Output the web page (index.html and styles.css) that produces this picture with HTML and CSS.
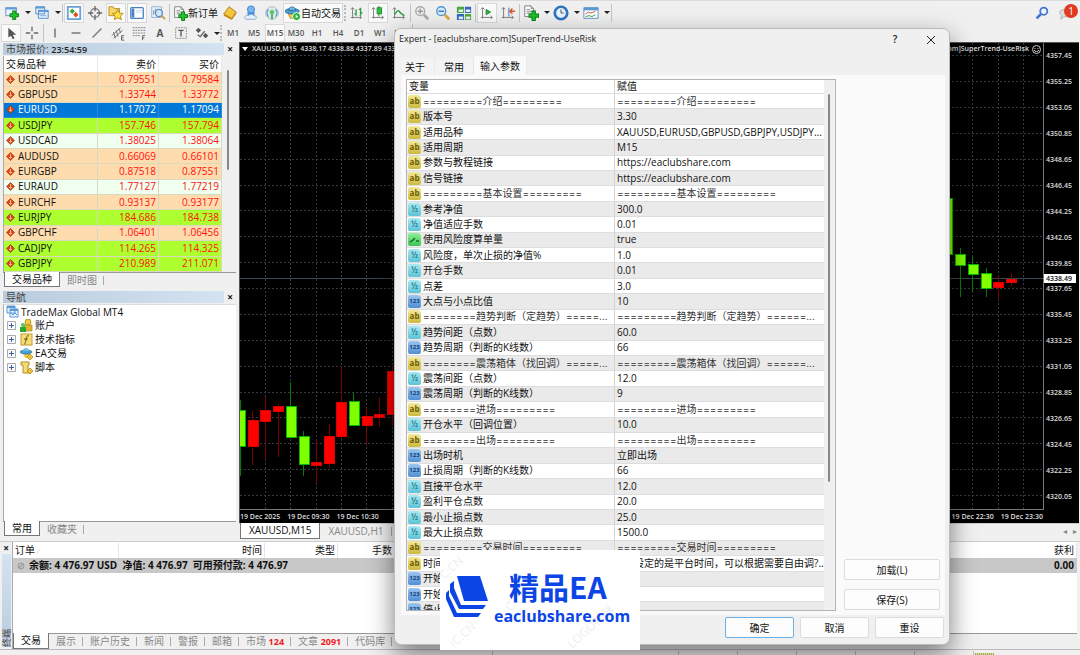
FILE: index.html
```html
<!DOCTYPE html>
<html lang="zh-CN">
<head>
    <meta charset="UTF-8">
    <meta name="viewport" content="width=device-width, initial-scale=1.0">
    <title>TradeMax Global MT4</title>
    <link rel="stylesheet" href="styles.css">
</head>
<body>
    <!-- 图标 -->
    <svg class="sprite" aria-hidden="true">
        <symbol id="down" viewBox="0 0 9 9"><path d="M4.500.5l4 4-4 4-4-4z" fill="#d9481c" stroke="#8f2a0c" stroke-width=".6"/><path d="M4.500 2v4M3 5l1.500 1.500L6 5" fill="none" stroke="#ffb48a"/></symbol>
        <symbol id="plus" viewBox="0 0 10 10"><path d="M3.500.5h3v3h3v3h-3v3h-3v-3h-3v-3h3z" fill="#1fc32a" stroke="#0b7f17"/></symbol>
        <symbol id="doc" viewBox="0 0 12 14"><path d="M1 1h7l3 3v9H1z" fill="#fff" stroke="#777"/><path d="M8 1v3h3M3 5h4M3 7h6M3 9h5" fill="none" stroke="#888"/></symbol>
        <symbol id="plusbox" viewBox="0 0 9 9"><path d="M.5.5h8v8h-8z" fill="#fafafa" stroke="#aaa"/><path d="M2 4.500h5M4.500 2v5" stroke="#3b5fa8"/></symbol>
    </svg>

    <div class="app">
        <div class="toolbar">
            <button class="tool" aria-label="新图表"><svg viewBox="0 0 18 18"><path d="M2 3h12v9H2z" fill="#eaf4fd" stroke="#5b8fc0"/><path d="M2 3h12v2H2z" fill="#5b9ad6"/><use href="#plus" x="6" y="6" width="11" height="11"/></svg></button>
            <button class="caret" aria-label="更多图表"></button>
            <button class="tool" aria-label="模板组"><svg viewBox="0 0 18 18"><path d="M2 2h10v8H2zM5 6h11v9H5z" fill="#e3f0fc" stroke="#4f8bc6"/><path d="M2 2h10v2H2zM5 6h11v2H5z" fill="#5b9ad6"/><path d="M7 12h7" stroke="#7fa8d0"/></svg></button>
            <button class="caret" aria-label="更多模板组"></button>
            <span class="sep"></span>
            <button class="tool pressed" aria-label="市场报价"><svg viewBox="0 0 18 18"><path d="M2 2h14v14H2z" fill="#fff" stroke="#6ba0d6" stroke-width="2"/><path d="M7 4l3 3-3 3-3-3z" fill="#2fae3b"/><path d="M11 8l3 3-3 3-3-3z" fill="#dd4a22"/></svg></button>
            <button class="tool" aria-label="数据窗口"><svg viewBox="0 0 18 18"><circle cx="9" cy="9" r="5" fill="none" stroke="#777" stroke-width="1.500"/><path d="M9 1v6M9 11v6M1 9h6M11 9h6" stroke="#666" stroke-width="1.500"/></svg></button>
            <button class="tool pressed" aria-label="导航"><svg viewBox="0 0 18 18"><path d="M1 2h5l1 2h6v8H1z" fill="#f6d66a" stroke="#b58d21"/><path d="M11 5l2 4 4 .5-3 3 1 4-4-2-4 2 1-4-3-3 4-.5z" fill="#ffdf3f" stroke="#b5861b"/></svg></button>
            <button class="tool pressed" aria-label="终端"><svg viewBox="0 0 18 18"><rect x="2" y="3" width="14" height="12" rx="1" fill="#fff" stroke="#4a7fc0" stroke-width="1.500"/><path d="M3 4h3v10H3z" fill="#4a7fc0"/><path d="M8 6h6M8 8h6" stroke="#c4d6ea"/></svg></button>
            <button class="tool" aria-label="策略测试"><svg viewBox="0 0 18 18"><path d="M2 2h11v12H2z" fill="#eef5fc" stroke="#88a9cb"/><path d="M4 11V6M6 9V4M8 10V6" stroke="#6a8fb8"/><circle cx="10" cy="9" r="4" fill="#cfe6fa" fill-opacity=".8" stroke="#5b8fc0" stroke-width="1.500"/><path d="M13 12l4 4" stroke="#d49a35" stroke-width="2"/></svg></button>
            <span class="sep"></span>
            <button class="tool wide"><svg viewBox="0 0 18 18"><use href="#doc" x="2" y="1" width="12" height="14"/><use href="#plus" x="7" y="7" width="11" height="11"/></svg>新订单</button>
            <button class="tool" aria-label="MetaEditor"><svg viewBox="0 0 18 18"><path d="M2 10l6-8 8 6-5 7z" fill="#f3c63c" stroke="#a9771a"/><path d="M2 10l9 5v2L2 12zM11 15l5-7v2l-5 7z" fill="#c98b1c"/></svg></button>
            <button class="tool" aria-label="云端"><svg viewBox="0 0 18 18"><circle cx="9" cy="5" r="4" fill="#7bb6ef" stroke="#3a7cc4"/><path d="M5 8h8v4H5z" fill="#4b93df"/><path d="M3 16c-3-3 1-5 3-4 2-2 5-2 6 0 3 0 4 2 2 4z" fill="#e9f2fb" stroke="#7fa5cf"/></svg></button>
            <button class="tool" aria-label="信号"><svg viewBox="0 0 18 18"><circle cx="9" cy="9" r="7" fill="#dce9ee" stroke="#9ab6c4"/><path d="M5 5a6 6 0 000 8M13 5a6 6 0 010 8" fill="none" stroke="#5aa0c8" stroke-width="1.500"/><circle cx="9" cy="8" r="2.500" fill="#5cc45c"/><path d="M9 10v6" stroke="#4dae4d" stroke-width="2"/></svg></button>
            <button class="tool wide pressed"><svg viewBox="0 0 18 18"><path d="M3 8h11l-2 7H6z" fill="#f0c845" stroke="#b58d21"/><ellipse cx="8" cy="7" rx="8" ry="3" fill="#4a9fd0" stroke="#246d9c"/><path d="M4 6c0-5 8-5 8 0z" fill="#6fbce6" stroke="#246d9c"/><circle cx="13" cy="13" r="4.500" fill="#28b53a" stroke="#fff"/><path d="M12 11l3 2-3 2z" fill="#fff"/></svg>自动交易</button>
            <span class="grip"></span>
            <button class="tool" aria-label="柱状图"><svg viewBox="0 0 18 18"><path d="M4 3v12M2 14h12M2 5l2-2 2 2M12 12l2 2-2 2" fill="none" stroke="#777"/><path d="M8 5v7M8 10H6M13 3v9M13 5h-2M15 9h-2" stroke="#2c9c40" stroke-width="1.500"/></svg></button>
            <button class="tool pressed" aria-label="蜡烛图"><svg viewBox="0 0 18 18"><path d="M4 3v12M2 14h13M2 5l2-2 2 2M13 12l2 2-2 2" fill="none" stroke="#777"/><path d="M10 1v12" stroke="#18862a"/><path d="M8 3h5v7H8z" fill="#2fc140" stroke="#18862a"/></svg></button>
            <button class="tool" aria-label="折线图"><svg viewBox="0 0 18 18"><path d="M4 3v12M2 14h13M2 5l2-2 2 2M13 12l2 2-2 2" fill="none" stroke="#777"/><path d="M4 11c3-6 5-5 6-3s3 2 5 4" fill="none" stroke="#2c9c40" stroke-width="1.500"/></svg></button>
            <span class="sep"></span>
            <button class="tool" aria-label="放大"><svg viewBox="0 0 18 18"><path d="M11 11l5 5" stroke="#aaa" stroke-width="3"/><circle cx="7" cy="7" r="5" fill="#eee" stroke="#aaa" stroke-width="1.500"/><path d="M4 7h6M7 4v6" stroke="#999" stroke-width="1.500"/></svg></button>
            <button class="tool" aria-label="缩小"><svg viewBox="0 0 18 18"><path d="M11 11l5 5" stroke="#d9ab3a" stroke-width="3"/><circle cx="7" cy="7" r="5" fill="#d8edfc" stroke="#4d93d0" stroke-width="1.500"/><path d="M4 7h6" stroke="#2c6fb0" stroke-width="1.500"/></svg></button>
            <button class="tool" aria-label="平铺窗口"><svg viewBox="0 0 18 18"><path d="M1 2h8v7H1zM10 10h7v7h-7z" fill="#4aa83a"/><path d="M10 2h7v7h-7zM1 10h8v7H1z" fill="#3467c0"/><path d="M3 5h5v3H3zM11 5h5v3h-5zM3 13h5v3H3zM11 13h5v3h-5z" fill="#e6f1f8"/></svg></button>
            <span class="sep"></span>
            <button class="tool pressed" aria-label="自动滚动"><svg viewBox="0 0 18 18"><path d="M4 3v12M2 14h13M2 5l2-2 2 2M13 12l2 2-2 2" fill="none" stroke="#777"/><path d="M8 5l5 3-5 3z" fill="#2fb53f" stroke="#18862a"/></svg></button>
            <button class="tool" aria-label="图表平移"><svg viewBox="0 0 18 18"><path d="M4 3v12M2 14h13M2 5l2-2 2 2M13 12l2 2-2 2" fill="none" stroke="#777"/><path d="M10 3v10" stroke="#3467c0"/><path d="M17 7h-5M14 4l-3 3 3 3" fill="none" stroke="#d2522a" stroke-width="1.500"/></svg></button>
            <span class="sep"></span>
            <button class="tool" aria-label="技术指标"><svg viewBox="0 0 18 18"><use href="#doc" x="1" y="0" width="12" height="14"/><use href="#plus" x="6" y="6" width="12" height="12"/></svg></button>
            <button class="caret" aria-label="更多指标"></button>
            <button class="tool" aria-label="时间周期"><svg viewBox="0 0 18 18"><circle cx="9" cy="9" r="7" fill="#e8f3fc" stroke="#2f74bd" stroke-width="3"/><path d="M9 5v4h3" fill="none" stroke="#444"/></svg></button>
            <button class="caret" aria-label="更多周期"></button>
            <button class="tool" aria-label="图表模板"><svg viewBox="0 0 18 18"><path d="M1 3h16v12H1z" fill="#fff" stroke="#4f8bc6"/><path d="M1 3h16v3H1z" fill="#5b9ad6"/><path d="M3 10l3-2 3 1 5-2" fill="none" stroke="#c2502c"/><path d="M3 13l4-1 3 1 4-2" fill="none" stroke="#2c9c40"/></svg></button>
            <button class="caret" aria-label="更多模板"></button>
            <span class="sep"></span>
            <span class="spacer"></span>
            <button class="tool" aria-label="搜索"><svg viewBox="0 0 18 18"><circle cx="11" cy="7" r="4" fill="#eef4ff" stroke="#4472cf" stroke-width="2"/><path d="M8 10l-5 5" stroke="#4472cf" stroke-width="3"/></svg></button>
            <button class="tool notice" aria-label="通知"><svg viewBox="0 0 18 18"><path d="M2 8c0-4 13-4 13 1 0 4-5 5-8 4l-4 3 1-4c-1-1-2-2-2-4z" fill="#ddd" stroke="#aaa"/></svg><span class="badge">1</span></button>
        </div>

        <div class="toolbar drawing">
            <button class="tool pressed" aria-label="光标"><svg viewBox="0 0 18 18"><path d="M6 3v11l3-2 2 4 2-1-2-4h4z" fill="#555"/></svg></button>
            <button class="tool" aria-label="十字准线"><svg viewBox="0 0 18 18"><path d="M9 2v5M9 11v5M2 9h5M11 9h5" stroke="#666" stroke-width="1.500"/></svg></button>
            <span class="sep"></span>
            <button class="tool" aria-label="垂直线"><svg viewBox="0 0 18 18"><path d="M9 4v10" stroke="#666" stroke-width="1.500"/></svg></button>
            <button class="tool" aria-label="水平线"><svg viewBox="0 0 18 18"><path d="M4 9h10" stroke="#666" stroke-width="1.500"/></svg></button>
            <button class="tool" aria-label="趋势线"><svg viewBox="0 0 18 18"><path d="M4 14L14 4" stroke="#777" stroke-width="1.500"/></svg></button>
            <button class="tool" aria-label="等距通道"><svg viewBox="0 0 18 18"><path d="M2 12L12 3M4 15l10-9M4 8l2 7M7 6l2 7M10 4l2 5" stroke="#666"/><path d="M16 12h-3v5h3M13 14.500h2" fill="none" stroke="#555"/></svg></button>
            <button class="tool" aria-label="斐波纳契"><svg viewBox="0 0 18 18"><path d="M2 3h14M2 6h14M2 9h14M2 12h9" stroke="#777" stroke-dasharray="2 1"/><path d="M16 12h-3v5M13 14.500h2" fill="none" stroke="#555"/></svg></button>
            <button class="tool letter">A</button>
            <button class="tool" aria-label="文本标签"><svg viewBox="0 0 18 18"><path d="M3 3h12v12H3z" fill="none" stroke="#888" stroke-dasharray="2 1"/><path d="M6 6h6M9 6v7" stroke="#555" stroke-width="1.500"/></svg></button>
            <button class="tool" aria-label="箭头"><svg viewBox="0 0 18 18"><path d="M5 3l3 3-3 3-3-3zM13 9l3 3-3 3-3-3z" fill="#555"/><path d="M4 11l3 2 5-6" fill="none" stroke="#666" stroke-width="1.500"/></svg></button>
            <button class="caret" aria-label="更多箭头"></button>
            <span class="grip"></span>
            <button class="tool period">M1</button>
            <button class="tool period">M5</button>
            <button class="tool period pressed">M15</button>
            <button class="tool period">M30</button>
            <button class="tool period">H1</button>
            <button class="tool period">H4</button>
            <button class="tool period">D1</button>
            <button class="tool period">W1</button>
            <button class="tool period">MN</button>
            <span class="sep"></span>
        </div>

        <div class="workspace">
            <div class="sidebar">
                <div class="panel-title"><span>市场报价: <b>23:54:59</b></span><button aria-label="关闭市场报价">×</button></div>
                <div class="market">
                    <table class="quotes">
                        <thead><tr><th>交易品种</th><th>卖价</th><th>买价</th></tr></thead>
                        <tbody>
                            <tr class="peach"><td><svg><use href="#down"/></svg>USDCHF</td><td>0.79551</td><td>0.79584</td></tr>
                            <tr class="peach"><td><svg><use href="#down"/></svg>GBPUSD</td><td>1.33744</td><td>1.33772</td></tr>
                            <tr class="selected"><td><svg><use href="#down"/></svg>EURUSD</td><td>1.17072</td><td>1.17094</td></tr>
                            <tr class="lime"><td><svg><use href="#down"/></svg>USDJPY</td><td>157.746</td><td>157.794</td></tr>
                            <tr class="mint"><td><svg><use href="#down"/></svg>USDCAD</td><td>1.38025</td><td>1.38064</td></tr>
                            <tr class="peach"><td><svg><use href="#down"/></svg>AUDUSD</td><td>0.66069</td><td>0.66101</td></tr>
                            <tr class="peach"><td><svg><use href="#down"/></svg>EURGBP</td><td>0.87518</td><td>0.87551</td></tr>
                            <tr class="mint"><td><svg><use href="#down"/></svg>EURAUD</td><td>1.77127</td><td>1.77219</td></tr>
                            <tr class="peach"><td><svg><use href="#down"/></svg>EURCHF</td><td>0.93137</td><td>0.93177</td></tr>
                            <tr class="lime"><td><svg><use href="#down"/></svg>EURJPY</td><td>184.686</td><td>184.738</td></tr>
                            <tr class="peach"><td><svg><use href="#down"/></svg>GBPCHF</td><td>1.06401</td><td>1.06456</td></tr>
                            <tr class="lime"><td><svg><use href="#down"/></svg>CADJPY</td><td>114.265</td><td>114.325</td></tr>
                            <tr class="lime"><td><svg><use href="#down"/></svg>GBPJPY</td><td>210.989</td><td>211.071</td></tr>
                        </tbody>
                    </table>
                    <div class="scroll"><div class="thumb"></div></div>
                </div>
                <div class="tabs"><button class="active">交易品种</button><button>即时图</button></div>

                <div class="panel-title second"><span>导航</span><button aria-label="关闭导航">×</button></div>
                <div class="tree">
                    <div class="root"><svg viewBox="0 0 13 13"><path d="M1 1h8v7H1zM4 4h8v8H4z" fill="#e6f2fc" stroke="#5b9ad6"/><path d="M1 1h8v2H1zM4 4h8v2H4z" fill="#5b9ad6"/><path d="M5 8l2 2 2-2 2 2" fill="none" stroke="#5b9ad6"/></svg>TradeMax Global MT4</div>
                    <ul>
                        <li><svg class="expand"><use href="#plusbox"/></svg><svg viewBox="0 0 13 13"><circle cx="8" cy="3" r="3" fill="#f0c83c" stroke="#a98117" stroke-width=".7"/><path d="M4 6h8v6H4z" fill="#e3b42e" stroke="#a98117" stroke-width=".7"/><circle cx="3" cy="6" r="2" fill="#51c858"/><path d="M0 8h6v5H0z" fill="#27a835"/></svg>账户</li>
                        <li><svg class="expand"><use href="#plusbox"/></svg><svg viewBox="0 0 13 13"><rect x="1" y="1" width="11" height="11" fill="#f6dc77" stroke="#c29a2c"/><path d="M9 3c-2-1-2 0-3 4s-1 4-2 4M4 6h4" fill="none" stroke="#6a5109"/></svg>技术指标</li>
                        <li><svg class="expand"><use href="#plusbox"/></svg><svg viewBox="0 0 13 13"><path d="M3 6h7l-2 5H5z" fill="#f0c845"/><ellipse cx="6" cy="5" rx="6" ry="2" fill="#4a9fd0" stroke="#246d9c" stroke-width=".7"/><path d="M3 4c0-4 6-4 6 0z" fill="#6fbce6"/><path d="M10 7l3 3-3 3-3-3z" fill="#edc23c" stroke="#a98117" stroke-width=".7"/></svg>EA交易</li>
                        <li><svg class="expand"><use href="#plusbox"/></svg><svg viewBox="0 0 13 13"><path d="M1 1h8v3H8v5h3v3H3V4H1z" fill="#f6dc77" stroke="#b58d21"/><path d="M10 7l3 3-3 3-3-3z" fill="#edc23c" stroke="#a98117" stroke-width=".7"/></svg>脚本</li>
                    </ul>
                </div>
                <div class="tabs"><button class="active">常用</button><button>收藏夹</button></div>
            </div>

            <div class="charts">
                <div class="chart">
                    <div class="plot">
                        <svg class="candles" viewBox="0 0 804 466" preserveAspectRatio="xMinYMin slice">
                            <path class="grid" d="M25 0V466M50 0V466M76 0V466M101 0V466M126 0V466M152 0V466M177 0V466M202 0V466M227 0V466M253 0V466M278 0V466M303 0V466M328 0V466M354 0V466M379 0V466M404 0V466M429 0V466M455 0V466M480 0V466M505 0V466M530 0V466M556 0V466M581 0V466M606 0V466M631 0V466M657 0V466M682 0V466M707 0V466M732 0V466M758 0V466M783 0V466M0 12H804M0 38H804M0 64H804M0 90H804M0 116H804M0 142H804M0 167H804M0 193H804M0 219H804M0 245H804M0 271H804M0 297H804M0 323H804M0 349H804M0 374H804M0 400H804M0 426H804M0 452H804"/>
                            <path d="M0 235H804" stroke="#3a4652"/>
                            <path class="up-wick" d="M0 357V433M50 339V394M63 388V433M113 350V383M720 205V254M732 214V248M746 225V254"/>
                            <path class="down-wick" d="M12 368V422M25 354V416M38 361V414M76 396V440M89 381V425M101 323V396M126 365V401M139 354V384M152 323V383M758 233V257M771 230V243"/>
                            <path class="up" d="M-5 367H5V403H-5zM46 363H56V394H46zM59 393H69V421H59zM109 358H119V382H109zM703 155H712V211H703zM715 211H725V222H715zM728 221H738V231H728zM741 230H751V245H741z"/>
                            <path class="down" d="M8 377H18V403H8zM20 367H30V378H20zM33 363H43V368H33zM71 419H81V422H71zM84 393H94V420H84zM96 359H106V393H96zM122 373H132V382H122zM134 371H144V374H134zM147 328H157V371H147zM753 239H763V244H753zM766 236H776V239H766z"/>
                        </svg>
                        <div class="caption"><i class="marker"></i>XAUUSD,M15&nbsp; 4338.17 4338.88 4337.89 4338.49<span class="expert">[eaclubshare.com]SuperTrend-UseRisk <svg viewBox="0 0 9 9"><circle cx="4.500" cy="4.500" r="4" fill="none" stroke="#ccc"/><path d="M3 3v1M6 3v1M2 5c1 2 4 2 5 0" fill="none" stroke="#ccc"/></svg></span></div>
                    </div>
                    <div class="prices">
                        <span>4357.45</span><span>4355.25</span><span>4353.05</span><span>4350.85</span><span>4348.65</span><span>4346.45</span><span>4344.25</span><span>4342.05</span><span>4339.85</span><span>4337.65</span><span>4335.45</span><span>4333.25</span><span>4331.05</span><span>4328.85</span><span>4326.65</span><span>4324.45</span><span>4322.25</span><span>4320.05</span>
                        <b class="price-tag">4338.49</b>
                    </div>
                    <div class="times"><span>19 Dec 2025</span><span>19 Dec 09:30</span><span>19 Dec 10:30</span><span class="late">19 Dec 22:30</span><span>19 Dec 23:30</span></div>
                </div>
                <div class="tabs chart-tabs"><button class="active">XAUUSD,M15</button><button>XAUUSD,H1</button><span class="arrows">◂ &nbsp; ▸</span></div>
            </div>
        </div>

        <div class="terminal">
            <div class="strip"><button aria-label="关闭终端">×</button><span>终端</span></div>
            <div class="terminal-body">
                <table class="orders">
                    <colgroup><col class="c-order"><col class="c-time"><col class="c-type"><col class="c-lots"><col></colgroup>
                    <thead><tr><th>订单 <i>⁄</i></th><th>时间</th><th>类型</th><th>手数</th><th>获利</th></tr></thead>
                    <tbody><tr><td colspan="4"><svg viewBox="0 0 8 8"><circle cx="4" cy="4" r="3" fill="#bbb" stroke="#999"/><path d="M2 6l4-4" stroke="#999"/></svg>余额: 4 476.97 USD&nbsp; 净值: 4 476.97&nbsp; 可用预付款: 4 476.97</td><td>0.00</td></tr></tbody>
                </table>
                <div class="tabs terminal-tabs">
                    <button class="active">交易</button><button>展示</button><button>账户历史</button><button>新闻</button><button>警报</button><button>邮箱</button><button>市场 <b>124</b></button><button>文章 <b>2091</b></button><button>代码库</button>
                </div>
            </div>
        </div>
        <div class="status"><span></span><span></span><span></span><span></span><span></span><span></span><span></span><i></i></div>
    </div>

    <div class="dialog" role="dialog" aria-labelledby="dialogTitle">
        <div class="dialog-title"><span id="dialogTitle">Expert - [eaclubshare.com]SuperTrend-UseRisk</span><button aria-label="帮助">?</button><button aria-label="关闭"><svg viewBox="0 0 10 10"><path d="M1 1l8 8M9 1L1 9" stroke="#222"/></svg></button></div>
        <div class="dialog-tabs"><button>关于</button><button>常用</button><button class="active">输入参数</button></div>
        <div class="dialog-page">
            <div class="params">
                <table>
                    <thead><tr><th>变量</th><th>赋值</th></tr></thead>
                    <tbody>
                        <tr class="section"><td><i class="kind ab">ab</i>=========介绍=========</td><td>=========介绍=========</td></tr>
                        <tr><td><i class="kind ab">ab</i>版本号</td><td>3.30</td></tr>
                        <tr><td><i class="kind ab">ab</i>适用品种</td><td>XAUUSD,EURUSD,GBPUSD,GBPJPY,USDJPY...</td></tr>
                        <tr><td><i class="kind ab">ab</i>适用周期</td><td>M15</td></tr>
                        <tr><td><i class="kind ab">ab</i>参数与教程链接</td><td>https://eaclubshare.com</td></tr>
                        <tr><td><i class="kind ab">ab</i>信号链接</td><td>https://eaclubshare.com</td></tr>
                        <tr class="section"><td><i class="kind ab">ab</i>=========基本设置=========</td><td>=========基本设置=========</td></tr>
                        <tr><td><i class="kind half">½</i>参考净值</td><td>300.0</td></tr>
                        <tr><td><i class="kind half">½</i>净值适应手数</td><td>0.01</td></tr>
                        <tr><td><i class="kind bool"><svg viewBox="0 0 13 13"><path d="M2 9l2-1 3-3M8 8h3" fill="none" stroke="#137128" stroke-width="1.500"/></svg></i>使用风险度算单量</td><td>true</td></tr>
                        <tr><td><i class="kind half">½</i>风险度，单次止损的净值%</td><td>1.0</td></tr>
                        <tr><td><i class="kind half">½</i>开仓手数</td><td>0.01</td></tr>
                        <tr><td><i class="kind half">½</i>点差</td><td>3.0</td></tr>
                        <tr><td><i class="kind num">123</i>大点与小点比值</td><td>10</td></tr>
                        <tr class="section"><td><i class="kind ab">ab</i>========趋势判断（定趋势）=====...</td><td>=========趋势判断（定趋势）======...</td></tr>
                        <tr><td><i class="kind half">½</i>趋势间距（点数）</td><td>60.0</td></tr>
                        <tr><td><i class="kind num">123</i>趋势周期（判断的K线数）</td><td>66</td></tr>
                        <tr class="section"><td><i class="kind ab">ab</i>========震荡箱体（找回调）=====...</td><td>=========震荡箱体（找回调）======...</td></tr>
                        <tr><td><i class="kind half">½</i>震荡间距（点数）</td><td>12.0</td></tr>
                        <tr><td><i class="kind num">123</i>震荡周期（判断的K线数）</td><td>9</td></tr>
                        <tr class="section"><td><i class="kind ab">ab</i>========进场=========</td><td>=========进场=========</td></tr>
                        <tr><td><i class="kind half">½</i>开仓水平（回调位置）</td><td>10.0</td></tr>
                        <tr class="section"><td><i class="kind ab">ab</i>========出场=========</td><td>=========出场=========</td></tr>
                        <tr><td><i class="kind num">123</i>出场时机</td><td>立即出场</td></tr>
                        <tr><td><i class="kind num">123</i>止损周期（判断的K线数）</td><td>66</td></tr>
                        <tr><td><i class="kind half">½</i>直接平仓水平</td><td>12.0</td></tr>
                        <tr><td><i class="kind half">½</i>盈利平仓点数</td><td>20.0</td></tr>
                        <tr><td><i class="kind half">½</i>最小止损点数</td><td>25.0</td></tr>
                        <tr><td><i class="kind half">½</i>最大止损点数</td><td>1500.0</td></tr>
                        <tr class="section"><td><i class="kind ab">ab</i>=========交易时间=========</td><td>=========交易时间=========</td></tr>
                        <tr><td><i class="kind ab">ab</i>时间</td><td>EA: 设定的是平台时间，可以根据需要自由调?..</td></tr>
                        <tr><td><i class="kind num">123</i>开始</td><td></td></tr>
                        <tr><td><i class="kind num">123</i>开始</td><td></td></tr>
                        <tr><td><i class="kind num">123</i>停止</td><td></td></tr>
                    </tbody>
                </table>
                <div class="scroll"><div class="thumb"></div></div>
            </div>
            <div class="side-buttons"><button>加载(L)</button><button>保存(S)</button></div>
        </div>
        <div class="dialog-footer"><button class="primary">确定</button><button>取消</button><button>重设</button></div>
    </div>

    <div class="brand">
        <svg class="brand-mark" viewBox="0 0 42 44"><path d="M11 1h23l8 25H18z" fill="#0b45e6"/><path d="M8 6v7l7 17h25l-3 4H13L4 17V9zM3 15v6l8 17h24l-3 4H8L0 24v-6z" fill="#0b45e6"/></svg>
        <div class="brand-text"><strong>精品EA</strong><span>eaclubshare.com</span></div>
        <svg class="brand-bg" viewBox="0 0 200 100"><text transform="translate(4 30) rotate(-42)">C.CN</text><text transform="translate(70 62) rotate(-42)">C.CN</text><text transform="translate(14 98) rotate(-42)">IC.CN</text><text transform="translate(132 99) rotate(-42)">LOGO神器</text></svg>
    </div>
</body>
</html>
```
FILE: styles.css
```css
* {
    margin: 0;
    padding: 0;
    box-sizing: border-box;
}

body {
    position: relative;
    background: #f0f0f0;
    color: #111;
    font-family: "Open Sans", "Noto Sans CJK SC", sans-serif;
    font-size: 10px;
    line-height: 14px;
    overflow: hidden;
}

button {
    background: none;
    border: none;
    color: inherit;
    font: inherit;
    white-space: nowrap;
}

table {
    border-spacing: 0;
    table-layout: fixed;
}

th {
    font-weight: normal;
}

.sprite {
    position: absolute;
    width: 0;
    height: 0;
}

.app {
    display: flex;
    flex-direction: column;
    min-height: 100vh;
}

/* toolbars */
.toolbar {
    display: flex;
    align-items: center;
    height: 24px;
    padding: 0 3px 0 2px;
    border-top: 1px solid #dcdcdc;
}

.toolbar.drawing {
    height: 18px;
    padding-left: 1px;
    border-top: none;
}

.tool {
    display: flex;
    align-items: center;
    justify-content: center;
    flex: none;
    width: 20px;
    height: 20px;
    margin-right: 1px;
}

.tool svg {
    width: 16px;
    height: 16px;
    flex: none;
}

.tool.wide {
    width: auto;
    padding: 0 1px;
}

.drawing .tool {
    height: 18px;
}

.pressed {
    background: #fafafa;
    border: 1px solid #d8d8d8;
}

.tool.letter {
    color: #555;
    font-weight: 700;
}

.tool.period {
    color: #555;
    font-size: 8px;
    font-weight: 600;
}

.caret {
    width: 9px;
    height: 18px;
}

.drawing .caret {
    width: 7px;
}

.caret::before {
    content: "";
    display: block;
    margin: 0 auto;
    width: 0;
    border: 3px solid transparent;
    border-top-color: #222;
    border-bottom: none;
}

.sep {
    width: 2px;
    height: 18px;
    border-left: 1px solid #c4c4c4;
}

.grip {
    width: 3px;
    height: 16px;
    border-left: 2px dotted #bbb;
}

.spacer {
    flex: 1;
}

.notice {
    position: relative;
    margin-left: 3px;
}

.badge {
    position: absolute;
    top: 1px;
    right: -2px;
    width: 14px;
    height: 14px;
    border-radius: 50%;
    background: #e23a22;
    color: white;
    line-height: 14px;
}

/* workspace */
.workspace {
    display: grid;
    grid-template-columns: 238px 1fr;
    flex: 1;
}

.sidebar {
    display: flex;
    flex-direction: column;
    padding: 1px 2px 5px 3px;
}

.panel-title {
    display: flex;
    height: 12px;
    margin-bottom: 1px;
    color: #444;
    line-height: 12px;
}

.panel-title span {
    flex: 1;
    padding-left: 3px;
    background: linear-gradient(90deg, #b9cbdd, #d4e3f2);
}

.panel-title b {
    color: #222;
    font-size: 9px;
    font-weight: 600;
}

.panel-title button,
.strip button {
    width: 12px;
    height: 12px;
    color: #111;
    font-weight: 700;
    line-height: 12px;
}

.panel-title.second {
    margin-top: 4px;
}

.market {
    display: flex;
    border-left: 1px solid #aaa;
    background: #f0f0f0;
}

.quotes {
    width: 218px;
    height: 216px;
    line-height: 13px;
}

.quotes th {
    height: 16px;
    background: white;
    border-right: 1px solid #e8e8e8;
    text-align: right;
    padding-right: 2px;
}

.quotes th:first-child,
.quotes td:first-child {
    width: 94px;
    padding-left: 2px;
    text-align: left;
    color: #111;
}

.quotes th:nth-child(2) {
    width: 61px;
}

.quotes td {
    padding-right: 2px;
    border-bottom: 1px solid #d9d9c0;
    border-right: 1px solid #d9d9c0;
    color: #ff1010;
    text-align: right;
}

.quotes td svg {
    width: 9px;
    height: 9px;
    margin-right: 3px;
    vertical-align: -1px;
}

.peach { background: #ffdcae; }
.lime { background: #adff2f; }
.mint { background: #f0fff0; }
.selected { background: #0078d7; }

.quotes .selected td,
.quotes .selected td:first-child {
    color: white;
    border-color: #2a8ade;
}

.scroll {
    flex: 1;
    padding: 14px 5px 0;
}

.thumb {
    width: 2px;
    height: 100px;
    border-radius: 1px;
    background: #888;
}

.tabs {
    display: flex;
    height: 15px;
    padding-left: 1px;
    border-top: 1px solid #999;
    color: #888;
}

.tabs button {
    position: relative;
    padding: 0 7px;
    line-height: 13px;
}

.tabs button::after {
    content: "";
    position: absolute;
    top: 3px;
    right: 0;
    height: 9px;
    border-right: 1px solid #aaa;
}

.tabs .active {
    margin-top: -1px;
    background: white;
    border: 1px solid #777;
    border-top: none;
    color: #111;
}

.tabs .active::after {
    display: none;
}

.tree {
    flex: 1;
    padding: 0 2px;
    background: white;
    border-left: 1px solid #aaa;
    border-top: 1px solid #ddd;
}

.tree svg {
    width: 13px;
    height: 13px;
    margin-right: 2px;
    flex: none;
}

.tree .root,
.tree li {
    display: flex;
    align-items: center;
    height: 13px;
}

.tree li {
    height: 14px;
    padding-left: 1px;
}

.tree ul {
    list-style: none;
}

.tree .expand {
    width: 9px;
    height: 9px;
    margin-right: 4px;
}

/* chart */
.charts {
    display: flex;
    flex-direction: column;
    padding: 0 1px 2px 1px;
}

.chart {
    display: grid;
    grid-template-columns: 1fr 35px;
    grid-template-rows: 467px 13px;
    background: black;
    border-top: 1px solid #555;
    border-left: 1px solid #555;
    color: #ddd;
    font-size: 7px;
    font-weight: 600;
    line-height: 9px;
}

.plot {
    position: relative;
    border-right: 1px solid #777;
    border-bottom: 1px solid #777;
    overflow: hidden;
}

.candles {
    display: block;
    width: 100%;
    height: 100%;
    shape-rendering: crispEdges;
}

.grid {
    fill: none;
    stroke: #343b42;
    stroke-dasharray: 2 2;
}

.up { fill: #7fff00; stroke: #00b400; }
.up-wick { stroke: #008000; }
.down { fill: #ff0000; stroke: #d80000; }
.down-wick { stroke: #7a0000; }

.caption {
    position: absolute;
    top: 1px;
    left: 2px;
    right: 2px;
    display: flex;
    align-items: center;
    line-height: 10px;
}

.marker {
    margin-right: 4px;
    border: 3px solid transparent;
    border-top: 4px solid white;
    border-bottom: none;
}

.expert {
    display: flex;
    align-items: center;
    gap: 3px;
    margin-left: auto;
}

.expert svg {
    width: 9px;
    height: 9px;
}

.prices {
    position: relative;
    display: flex;
    flex-direction: column;
    justify-content: space-between;
    padding: 8px 0 9px 2px;
}

.price-tag {
    position: absolute;
    top: 231px;
    left: 0;
    right: 3px;
    padding-left: 2px;
    background: white;
    color: #111;
    font-weight: 600;
}

.times {
    display: flex;
    grid-column: 1 / -1;
    gap: 7px;
    padding: 2px 36px 0 0;
}

.times .late {
    margin-left: auto;
}

.chart-tabs {
    height: 16px;
    border-top-color: #ccc;
}

.chart-tabs button {
    padding: 0 8px;
    line-height: 13px;
}

.arrows {
    margin-left: auto;
    padding-right: 2px;
    font-size: 8px;
}

/* terminal */
.terminal {
    display: flex;
    height: 108px;
    padding-right: 3px;
    border-top: 1px solid #ccc;
}

.strip {
    display: flex;
    flex-direction: column;
    width: 12px;
    padding-bottom: 2px;
}

.strip span {
    flex: 1;
    margin: 0 1px 0 2px;
    background: linear-gradient(#b9cbdd, #d4e3f2);
    color: #444;
    font-size: 9px;
    line-height: 9px;
    writing-mode: vertical-rl;
    text-orientation: sideways;
    transform: rotate(180deg);
}

.terminal-body {
    display: flex;
    flex-direction: column;
    flex: 1;
    padding-top: 1px;
    background: white;
    border-left: 1px solid #aaa;
}

.orders {
    width: 100%;
    line-height: 13px;
}

.c-order { width: 106px; }
.c-time { width: 146px; }
.c-type { width: 73px; }
.c-lots { width: 57px; }

.orders th {
    height: 15px;
    padding: 0 2px;
    border-right: 1px solid #e5e5e5;
    text-align: right;
}

.orders th:first-child {
    text-align: left;
}

.orders th i {
    color: #bbb;
    font-size: 7px;
    line-height: 10px;
}

.orders td {
    height: 15px;
    padding: 0 3px;
    background: #c8c8c8;
    font-weight: 700;
}

.orders td:last-child {
    text-align: right;
}

.orders td svg {
    width: 8px;
    height: 8px;
    margin: 0 4px 0 1px;
    vertical-align: -1px;
}

.terminal-tabs {
    height: 16px;
    margin-top: auto;
    padding-left: 0;
    background: #f0f0f0;
}

.terminal-tabs b {
    color: #f01c24;
    font-size: 9px;
}

.status {
    display: flex;
    height: 6px;
    padding: 1px 86px 0 0;
    justify-content: flex-end;
    border-top: 1px solid #bbb;
}

.status span {
    width: 59px;
    border-left: 1px solid #bbb;
}

.status span:first-child {
    width: 186px;
}

.status span:last-of-type {
    width: 2px;
}

.status i {
    width: 19px;
    margin-top: 2px;
    background: repeating-linear-gradient(90deg, #9aab52 0 1px, #d5dca8 1px 2px);
}

/* EA 参数窗口 */
.dialog {
    position: absolute;
    top: 28px;
    left: 394px;
    width: 556px;
    padding-bottom: 6px;
    background: #f0f0f0;
    border: 1px solid #bbb;
    border-radius: 7px;
    box-shadow: 0 10px 26px rgba(0,0,0,0.5);
}

.dialog-title {
    display: flex;
    align-items: center;
    height: 20px;
    margin-bottom: 7px;
    padding-left: 4px;
    color: #222;
}

.dialog-title span {
    flex: 1;
    font-size: 9px;
}

.dialog-title button {
    width: 36px;
}

.dialog-title button:first-of-type {
    font-weight: 600;
}

.dialog-title svg {
    width: 10px;
    height: 10px;
    vertical-align: middle;
}

.dialog-tabs {
    display: flex;
    align-items: flex-end;
    padding-left: 6px;
}

.dialog-tabs button {
    height: 17px;
    padding: 0 9px;
    background: #f3f3f3;
    border-right: 1px solid #e8e8e8;
}

.dialog-tabs button:first-child {
    padding-left: 4px;
}

.dialog-tabs .active {
    height: 19px;
    padding: 0 6px;
    background: #fafafa;
}

.dialog-page {
    display: flex;
    gap: 8px;
    margin: 0 4px 0 6px;
    padding: 4px 5px;
    background: #fafafa;
}

.params {
    display: flex;
    align-items: flex-start;
    flex: 1;
    height: 532px;
    border: 1px solid #b4b4b4;
    background: #f0f0f0;
    overflow: hidden;
}

.params table {
    width: 417px;
    height: 538px;
    flex: none;
}

.params th,
.params td {
    padding-left: 2px;
    border-bottom: 1px solid #dedede;
    background: white;
    line-height: 13px;
    text-align: left;
    white-space: nowrap;
    overflow: hidden;
}

.params th:first-child,
.params td:first-child {
    width: 208px;
    padding-left: 1px;
    border-right: 1px solid #d4d4d4;
}

.params th:first-child {
    padding-left: 2px;
}

.params tr:nth-child(even) td {
    background: #eaeaea;
}

.params .section td {
    color: #333;
    font-family: "Inter", "Noto Sans CJK SC", sans-serif;
}

.kind {
    display: inline-block;
    width: 13px;
    height: 13px;
    margin-right: 2px;
    border-radius: 2px 4px 2px 2px;
    font-family: "Open Sans", sans-serif;
    font-size: 8px;
    font-style: normal;
    font-weight: 700;
    line-height: 12px;
    text-align: center;
    vertical-align: top;
}

.kind svg {
    display: block;
    width: 13px;
    height: 13px;
}

.ab {
    background: linear-gradient(#f3e99a, #cdb93c);
    color: #6a5c08;
}

.half {
    background: linear-gradient(#a9eaf3, #5cc3d6);
    color: #2c8796;
}

.num {
    background: linear-gradient(#9cc6f0, #4f8fd2);
    color: #123f78;
    font-size: 6px;
}

.bool {
    background: linear-gradient(#8ff09a, #3fc455);
}

.params .scroll {
    padding-left: 4px;
}

.params .thumb {
    height: 388px;
}

.side-buttons {
    display: flex;
    flex-direction: column;
    justify-content: flex-end;
    gap: 9px;
    width: 96px;
    padding-bottom: 1px;
}

.side-buttons button,
.dialog-footer button {
    height: 21px;
    background: #fdfdfd;
    border: 1px solid #dcdcdc;
    border-radius: 2px;
}

.dialog-footer {
    display: flex;
    justify-content: flex-end;
    gap: 6px;
    padding: 2px 5px 0 0;
}

.dialog-footer button {
    width: 69px;
}

.dialog-footer .primary {
    border-color: #6bb0e6;
}

/* logo */
.brand {
    position: absolute;
    isolation: isolate;
    top: 550px;
    left: 440px;
    display: flex;
    width: 200px;
    height: 100px;
    padding: 16px 0 0 6px;
    gap: 6px;
    background: white;
    color: #0b45e6;
}

.brand-mark {
    width: 42px;
    height: 44px;
    margin-top: 9px;
}

.brand-text strong {
    display: block;
    padding-left: 15px;
    font-family: "Noto Sans CJK SC", sans-serif;
    font-size: 30px;
    line-height: 40px;
}

.brand-text span {
    display: block;
    font-size: 16px;
    font-weight: 700;
    line-height: 20px;
}

.brand-bg {
    position: absolute;
    inset: 0;
    z-index: -1;
    fill: #efefef;
    font-size: 12px;
}
```
